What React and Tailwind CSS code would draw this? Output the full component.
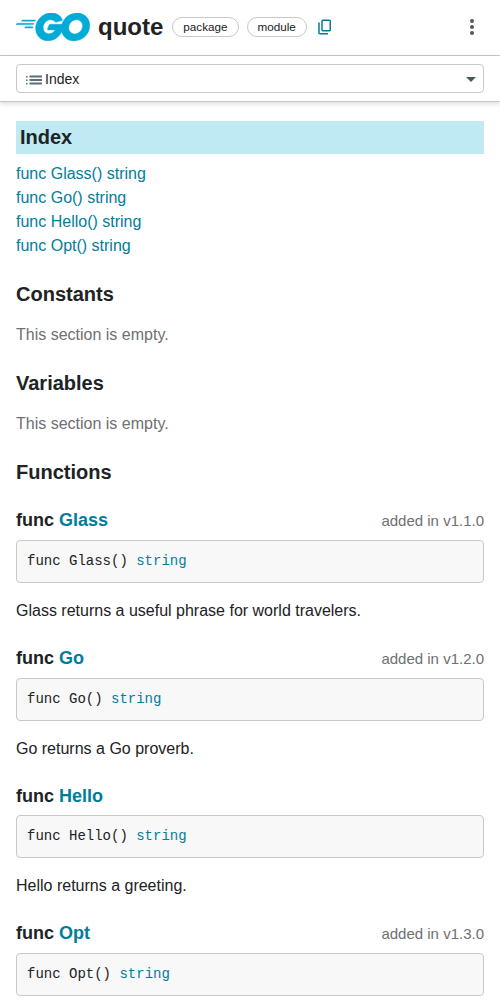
const EMPTY_SECTIONS = ['Constants', 'Variables'];

const FUNCS = [
  { name: 'Glass', added: 'v1.1.0', doc: 'Glass returns a useful phrase for world travelers.' },
  { name: 'Go', added: 'v1.2.0', doc: 'Go returns a Go proverb.' },
  { name: 'Hello', doc: 'Hello returns a greeting.' },
  { name: 'Opt', added: 'v1.3.0' },
];

function GoLogo() {
  return (
    <svg className="mb-px h-7 w-[74px] shrink-0" viewBox="24.7 78.6 206 76.2" preserveAspectRatio="none" fill="#00acd7" stroke="#00acd7" strokeWidth="1" aria-label="Go">
      <path d="M40.2,101.1c-0.4,0-0.5-0.2-0.3-0.5l2.1-2.7c0.2-0.3,0.7-0.5,1.1-0.5l35.7,0c0.4,0,0.5,0.3,0.3,0.6l-1.7,2.6c-0.2,0.3-0.7,0.6-1,0.6L40.2,101.1z" />
      <path d="M25.1,110.3c-0.4,0-0.5-0.2-0.3-0.5l2.1-2.7c0.2-0.3,0.7-0.5,1.1-0.5l45.6,0c0.4,0,0.6,0.3,0.5,0.6l-0.8,2.4c-0.1,0.4-0.5,0.6-0.9,0.6L25.1,110.3z" />
      <path d="M49.3,119.5c-0.4,0-0.5-0.3-0.3-0.6l1.4-2.5c0.2-0.3,0.6-0.6,1-0.6l20,0c0.4,0,0.6,0.3,0.6,0.7l-0.2,2.4c0,0.4-0.4,0.7-0.7,0.7L49.3,119.5z" />
      <path d="M153.1,99.3c-6.3,1.6-10.6,2.8-16.8,4.4c-1.5,0.4-1.6,0.5-2.9-1c-1.5-1.7-2.6-2.8-4.7-3.8c-6.3-3.1-12.4-2.2-18.1,1.5c-6.8,4.4-10.3,10.9-10.2,19c0.1,8,5.6,14.6,13.5,15.7c6.8,0.9,12.5-1.5,17-6.6c0.9-1.1,1.7-2.3,2.7-3.7c-3.6,0-8.1,0-19.3,0c-2.1,0-2.6-1.3-1.9-3c1.3-3.1,3.7-8.3,5.1-10.9c0.3-0.6,1-1.6,2.5-1.6c5.1,0,23.9,0,36.4,0c-0.2,2.7-0.2,5.4-0.6,8.1c-1.1,7.2-3.8,13.8-8.2,19.6c-7.2,9.5-16.6,15.4-28.5,17c-9.8,1.3-18.9-0.6-26.9-6.6c-7.4-5.6-11.6-13-12.7-22.2c-1.3-10.9,1.9-20.7,8.5-29.3c7.1-9.3,16.5-15.2,28-17.3c9.4-1.7,18.4-0.6,26.5,4.9c5.3,3.5,9.1,8.3,11.6,14.1C154.7,98.5,154.3,99,153.1,99.3z" />
      <path fillRule="evenodd" d="M186.2,154.6c-9.1-0.2-17.4-2.8-24.4-8.8c-5.9-5.1-9.6-11.6-10.8-19.3c-1.8-11.3,1.3-21.3,8.1-30.2c7.3-9.6,16.1-14.6,28-16.7c10.2-1.8,19.8-0.8,28.5,5.1c7.9,5.4,12.8,12.7,14.1,22.3c1.7,13.5-2.2,24.5-11.5,33.9c-6.6,6.7-14.7,10.9-24,12.8C191.5,154.2,188.8,154.3,186.2,154.6z M210,114.2c-0.1-1.3-0.1-2.3-0.3-3.3c-1.8-9.9-10.9-15.5-20.4-13.3c-9.3,2.1-15.3,8-17.5,17.4c-1.8,7.8,2,15.7,9.2,18.9c5.5,2.4,11,2.1,16.3-0.6C205.2,129.2,209.5,122.8,210,114.2z" />
    </svg>
  );
}

function Chip({ children }) {
  return (
    <span className="mr-2 mb-px flex h-5 items-center rounded-full border border-[#c6c8ca] px-[10px] text-[11.7px]">{children}</span>
  );
}

function Header() {
  return (
    <header className="flex h-14 items-center border-b border-[#c6c8ca] px-4">
      <GoLogo />
      <h1 className="mr-[9px] mb-[2px] ml-2 text-2xl leading-8 font-bold">quote</h1>
      <Chip>package</Chip>
      <Chip>module</Chip>
      <svg className="mb-px ml-px h-[18px] w-[18px]" viewBox="0 0 24 24" fill="#007d9c">
        <path d="M5 22q-.825 0-1.412-.587Q3 20.825 3 20V6h2v14h11v2Zm4-4q-.825 0-1.412-.587Q7 16.825 7 16V4q0-.825.588-1.413Q8.175 2 9 2h9q.825 0 1.413.587Q20 3.175 20 4v12q0 .825-.587 1.413Q18.825 18 18 18Zm0-2h9V4H9v12Z" />
      </svg>
      <svg className="mb-px ml-auto h-6 w-6" viewBox="0 0 24 24" fill="#555759">
        <circle cx="12" cy="6" r="2" />
        <circle cx="12" cy="12" r="2" />
        <circle cx="12" cy="18" r="2" />
      </svg>
    </header>
  );
}

function JumpSelect() {
  return (
    <nav className="h-[46px] border-b border-[#c6c8ca] px-4 pt-2 shadow-[0_2px_5px_rgba(0,0,0,0.14)]">
      <div className="flex h-[29px] items-center rounded border border-[#c6c8ca] pr-[7px] pl-[9px] text-sm">
        <svg className="mt-[2px] mr-[3px] h-[10px] w-4" viewBox="0 0 16 10" fill="#5a6f7a">
          <path d="M0 1h1.5v1.5H0zM0 4.5h1.5V6H0zM0 8h1.5v1.5H0zM3.5 .5H16v2H3.5zM3.5 4H16v2H3.5zM3.5 7.5H16v2H3.5z" />
        </svg>
        <span>Index</span>
        <svg className="mt-px ml-auto h-[5px] w-[10px]" viewBox="0 0 10 5" fill="#455a64">
          <path d="M0 0h10L5 5z" />
        </svg>
      </div>
    </nav>
  );
}

function FuncEntry({ name, added, doc }) {
  return (
    <section className="mb-[23px]">
      <div className={added ? 'mb-2 flex h-6 items-center justify-between' : 'mb-[7px] flex h-6 items-center'}>
        <h3 className="text-lg font-bold">
          func <a className="text-[#007d9c]">{name}</a>
        </h3>
        {added && <span className="mt-[2px] text-[15px] text-[#6e7072]">added in {added}</span>}
      </div>
      <pre className="flex h-[43px] items-center rounded border border-[#c6c8ca] bg-[#f8f8f8] px-[10px] pb-px font-['Liberation_Mono',monospace] text-sm">
        {`func ${name}() `}
        <a className="text-[#007d9c]">string</a>
      </pre>
      {doc && <p className="mt-4 h-6 text-base leading-6">{doc}</p>}
    </section>
  );
}

export default function App() {
  return (
    <div className="h-[1000px] overflow-hidden bg-white font-['Liberation_Sans',Arial,sans-serif] text-[#202224]">
      <Header />
      <JumpSelect />
      <main className="px-4 pt-[19px]">
        <h2 className="h-[33px] bg-[#bfeaf4] pl-1 text-xl leading-8 font-bold">Index</h2>
        <ul className="mt-2 text-base leading-6 text-[#007d9c]">
          {FUNCS.map((f) => (
            <li key={f.name}>func {f.name}() string</li>
          ))}
        </ul>
        {EMPTY_SECTIONS.map((title) => (
          <section key={title} className="mt-5">
            <h2 className="text-xl leading-8 font-bold">{title}</h2>
            <p className="mt-[13px] h-6 text-base leading-6 text-[#6e7072]">This section is empty.</p>
          </section>
        ))}
        <h2 className="mt-5 mb-5 text-xl leading-8 font-bold">Functions</h2>
        {FUNCS.map((f) => (
          <FuncEntry key={f.name} {...f} />
        ))}
      </main>
    </div>
  );
}
